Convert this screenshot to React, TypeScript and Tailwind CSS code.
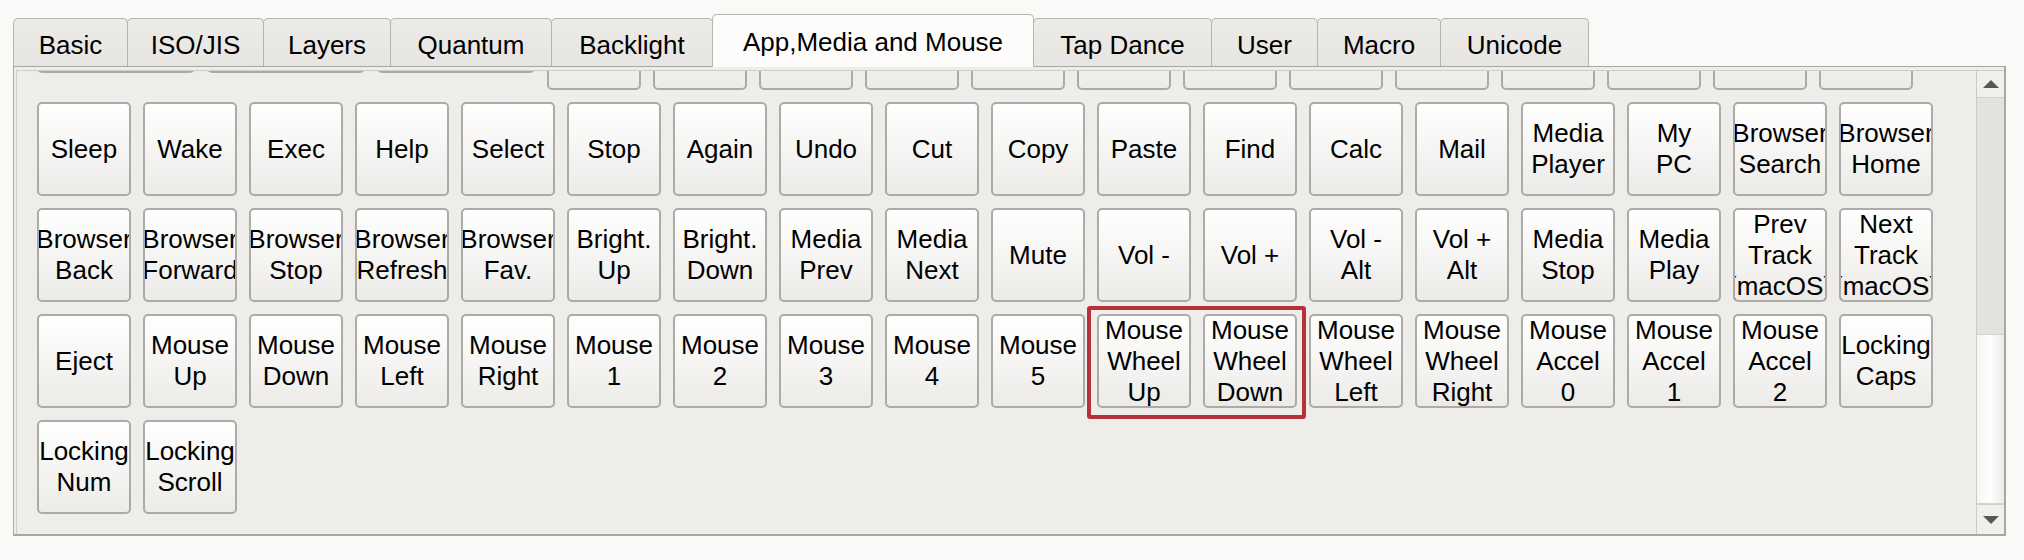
import { useLayoutEffect, useRef } from "react";

type Key = { label: string; wide?: boolean; mark?: boolean };

const TABS = [
  { label: "Basic", w: "w-[115px]" },
  { label: "ISO/JIS", w: "w-[137px]" },
  { label: "Layers", w: "w-[128px]" },
  { label: "Quantum", w: "w-[162px]" },
  { label: "Backlight", w: "w-[162px]" },
  { label: "App,Media and Mouse", w: "w-[322px]", active: true },
  { label: "Tap Dance", w: "w-[179px]" },
  { label: "User", w: "w-[107px]" },
  { label: "Macro", w: "w-[124px]" },
  { label: "Unicode", w: "w-[149px]" },
];

// row above is scrolled out of view, only the bottom edges show
const hidden: Key[] = [
  { label: "", wide: true },
  { label: "", wide: true },
  { label: "", wide: true },
  ...Array.from({ length: 13 }, () => ({ label: "" })),
];

const keys: Key[] = [
  ...hidden,
  // app keys
  { label: "Sleep" },
  { label: "Wake" },
  { label: "Exec" },
  { label: "Help" },
  { label: "Select" },
  { label: "Stop" },
  { label: "Again" },
  { label: "Undo" },
  { label: "Cut" },
  { label: "Copy" },
  { label: "Paste" },
  { label: "Find" },
  { label: "Calc" },
  { label: "Mail" },
  { label: "Media\nPlayer" },
  { label: "My\nPC" },
  { label: "Browser\nSearch" },
  { label: "Browser\nHome" },
  { label: "Browser\nBack" },
  { label: "Browser\nForward" },
  { label: "Browser\nStop" },
  { label: "Browser\nRefresh" },
  { label: "Browser\nFav." },
  { label: "Bright.\nUp" },
  { label: "Bright.\nDown" },
  { label: "Media\nPrev" },
  { label: "Media\nNext" },
  { label: "Mute" },
  { label: "Vol -" },
  { label: "Vol +" },
  { label: "Vol -\nAlt" },
  { label: "Vol +\nAlt" },
  { label: "Media\nStop" },
  { label: "Media\nPlay" },
  { label: "Prev\nTrack\n(macOS)" },
  { label: "Next\nTrack\n(macOS)" },
  // mouse keys
  { label: "Eject" },
  { label: "Mouse\nUp" },
  { label: "Mouse\nDown" },
  { label: "Mouse\nLeft" },
  { label: "Mouse\nRight" },
  { label: "Mouse\n1" },
  { label: "Mouse\n2" },
  { label: "Mouse\n3" },
  { label: "Mouse\n4" },
  { label: "Mouse\n5" },
  { label: "Mouse\nWheel\nUp", mark: true },
  { label: "Mouse\nWheel\nDown" },
  { label: "Mouse\nWheel\nLeft" },
  { label: "Mouse\nWheel\nRight" },
  { label: "Mouse\nAccel\n0" },
  { label: "Mouse\nAccel\n1" },
  { label: "Mouse\nAccel\n2" },
  { label: "Locking\nCaps" },
  { label: "Locking\nNum" },
  { label: "Locking\nScroll" },
];

function KeyButton({ k }: { k: Key }) {
  const lines = k.label ? k.label.split("\n") : [];
  return (
    <div className="relative shrink-0">
      <button
        className={`${
          k.wide ? "w-[158px] h-[77px]" : "w-[94px] h-[94px]"
        } flex flex-col items-center justify-center overflow-hidden rounded-[5px] border-2 border-[#adaba8] bg-linear-to-b from-[#ffffff] to-[#ecebe8] text-[26px] leading-[31px] text-black`}
      >
        {lines.map((line, i) => (
          <span key={i} className="shrink-0 whitespace-nowrap">
            {line}
          </span>
        ))}
      </button>
      {k.mark && (
        <div className="pointer-events-none absolute -left-[10px] -top-[8px] h-[113px] w-[219px] rounded-[3px] border-4 border-[#b6323a]" />
      )}
    </div>
  );
}

function Scrollbar() {
  return (
    <div className="flex w-[28px] shrink-0 flex-col border-l border-[#cdcbc8] bg-[#e4e2df]">
      <div className="flex h-[27px] items-center justify-center border-b border-[#d2d0cd] bg-[#f1efec]">
        <svg width="16" height="8" viewBox="0 0 16 8">
          <polygon points="8,0 16,8 0,8" fill="#575757" />
        </svg>
      </div>
      <div className="flex flex-1 flex-col justify-end">
        <div className="h-[170px] border-y border-[#d6d4d1] bg-linear-to-r from-[#f4f4f3] via-[#ffffff] to-[#ecebea]" />
      </div>
      <div className="flex h-[30px] items-center justify-center border-t border-[#d2d0cd] bg-[#f1efec]">
        <svg width="16" height="8" viewBox="0 0 16 8">
          <polygon points="0,0 16,0 8,8" fill="#575757" />
        </svg>
      </div>
    </div>
  );
}

export default function App() {
  const scrollRef = useRef<HTMLDivElement>(null);

  useLayoutEffect(() => {
    const el = scrollRef.current;
    if (el) el.scrollTop = el.scrollHeight;
  }, []);

  return (
    <div className="h-[560px] w-[2024px] bg-[#fbf9f7] pl-[13px] pt-[14px] font-['Liberation_Sans',Arial,sans-serif] text-black">
      <div className="flex items-end">
        {TABS.map((t, i) => (
          <div
            key={t.label}
            className={`${t.w} ${i > 0 ? "-ml-px" : ""} ${
              t.active
                ? "relative z-10 -mb-px h-[53px] bg-[#fdfcfb] pt-[1px]"
                : "h-[48px] bg-linear-to-b from-[#ecebe8] to-[#e7e5e2] pt-[4px]"
            } flex items-center justify-center rounded-t-[5px] border border-b-0 border-[#b6b4b1] text-[26px] leading-none`}
          >
            {t.label}
          </div>
        ))}
      </div>

      <div className="flex h-[470px] w-[1993px] flex-col border border-r-2 border-b-2 border-[#a9a7a4] bg-[#efedea] pl-[2px] pt-[3px]">
        <div className="flex min-h-0 flex-1 border-l border-t border-[#cfcdca]">
          <div ref={scrollRef} className="min-w-0 flex-1 overflow-hidden">
            <div className="flex flex-wrap items-start gap-[12px] p-[20px]">
              {keys.map((k, i) => (
                <KeyButton key={i} k={k} />
              ))}
            </div>
          </div>
          <Scrollbar />
        </div>
      </div>
    </div>
  );
}
